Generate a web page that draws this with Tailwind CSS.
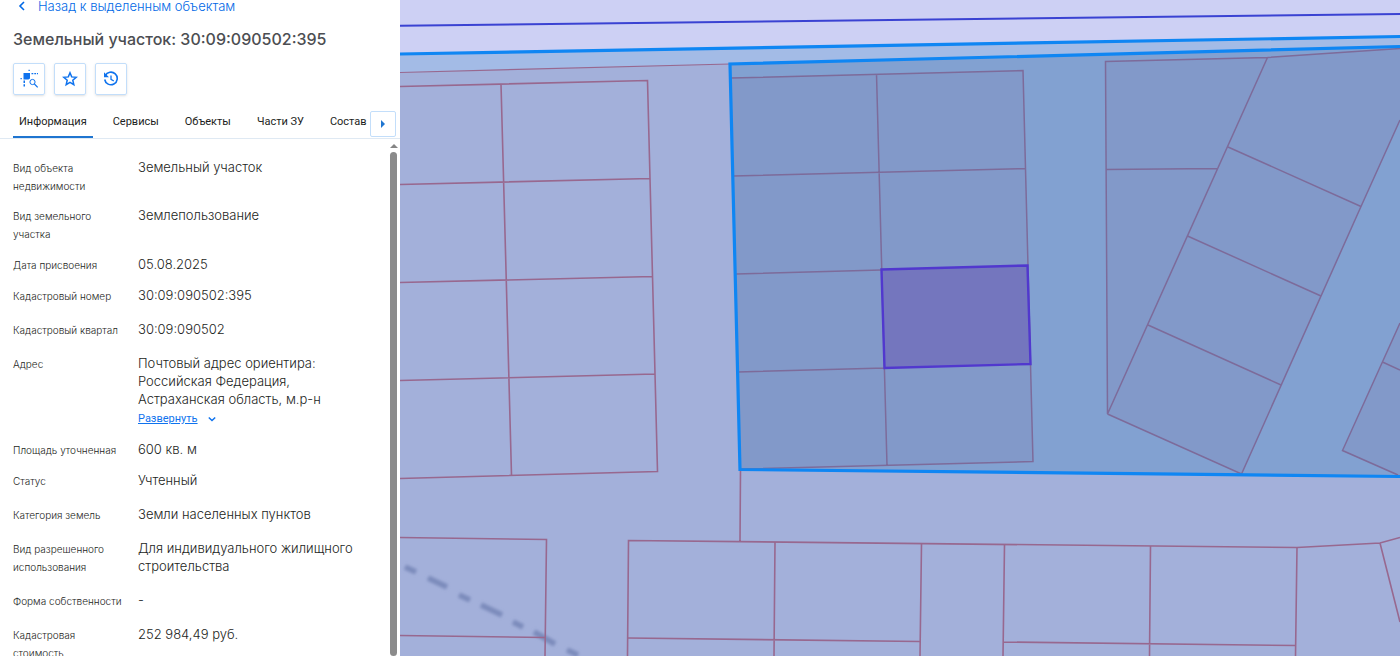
<!DOCTYPE html>
<html lang="ru">
<head>
  <meta charset="UTF-8" />
  <meta name="viewport" content="width=device-width, initial-scale=1" />
  <title>Земельный участок: 30:09:090502:395</title>
  <script src="https://cdn.jsdelivr.net/npm/@tailwindcss/browser@4"></script>
</head>
<body class="flex h-screen overflow-hidden bg-white font-['Inter',sans-serif] text-[#1c1e22]">
  <!-- Карточка объекта -->
  <aside class="flex w-[400px] shrink-0 flex-col">
    <header class="px-[13px]">
      <a href="#" class="flex h-4 items-center gap-2.5 pl-[3px] text-[13px] leading-4 font-light text-[#0068e6]">
        <svg class="-mt-1 h-3 w-3" viewBox="0 0 12 12" fill="none" stroke="currentColor" stroke-width="1.6"><path d="M8 2 4 6l4 4" /></svg>
        <span class="-mt-1">Назад к выделенным объектам</span>
      </a>
      <h1 class="mt-[11px] text-base leading-6 font-medium text-[#4c4e52]">Земельный участок: 30:09:090502:395</h1>
      <div class="mt-3 flex gap-[9px] text-[#0f73ee]">
        <button type="button" aria-label="Показать на карте" class="flex h-8 w-8 items-center justify-center rounded-xs border border-[#c3defa] shadow-sm">
          <svg class="h-5 w-5" viewBox="0 0 20 20" fill="currentColor">
            <path d="M4.500 4h6.500v5.500L9.500 10.500h-5zM9.500.800h1.300v1.300H9.500zM12.500 4h1.800v1.300h-1.800zM15.300 4h1.800v1.300h-1.800zM18 4h1v1.300h-1zM1.500 9h1.300v1.300H1.500zM4.500 11.500h1.500v2.500H4.500zM4.500 15.200h1.500v2.300H4.500z" />
            <circle cx="13.500" cy="13" r="2.600" fill="none" stroke="currentColor" />
            <path d="m15.400 15 3.300 3.300" stroke="currentColor" stroke-width="1.200" />
          </svg>
        </button>
        <button type="button" aria-label="В избранное" class="flex h-8 w-8 items-center justify-center rounded-xs border border-[#c3defa] shadow-sm">
          <svg class="h-4 w-4" viewBox="0 0 16 16" fill="none" stroke="currentColor" stroke-width="1.500"><path d="m8 1.800 1.700 4.100 4.500.4-3.400 2.900 1 4.400L8 11.300l-3.800 2.300 1-4.400-3.400-2.900 4.500-.4z" /></svg>
        </button>
        <button type="button" aria-label="История" class="flex h-8 w-8 items-center justify-center rounded-xs border border-[#c3defa] shadow-sm">
          <svg class="h-4 w-4" viewBox="0 0 16 16" fill="none" stroke="currentColor" stroke-width="1.600">
            <path d="M2.200 4.800A6.300 6.300 0 1 1 1.700 8.500" />
            <path d="M1 1.300v5h5z" fill="currentColor" stroke="none" />
            <path d="M8 4.500v3.800l2.800 1.700" stroke-width="1.300" />
          </svg>
        </button>
      </div>
    </header>

    <div class="mt-2.5 flex h-[34px] border-b border-[#dfe9f3] pr-1 pl-[13px] font-['Roboto',sans-serif] text-[11px]">
      <nav class="flex min-w-0 flex-1 gap-3.5 whitespace-nowrap">
        <button type="button" class="shrink-0 border-b-2 border-[#1f75d0] px-1.5 pt-1">Информация</button>
        <button type="button" class="shrink-0 border-b-2 border-transparent px-1.5 pt-1">Сервисы</button>
        <button type="button" class="shrink-0 border-b-2 border-transparent px-1.5 pt-1">Объекты</button>
        <button type="button" class="shrink-0 border-b-2 border-transparent px-1.5 pt-1">Части ЗУ</button>
        <button type="button" class="shrink-0 border-b-2 border-transparent pt-1 pl-1.5">Состав</button>
      </nav>
      <button type="button" aria-label="Следующие вкладки" class="mt-1.5 flex h-[26px] w-[26px] shrink-0 items-center justify-center rounded-xs border border-[#c3defa] text-[#1f75d0]">
        <svg class="h-2 w-1" viewBox="0 0 4 8" fill="currentColor"><path d="M0 0v8l4-4z" /></svg>
      </button>
    </div>

    <div class="flex min-h-0 flex-1">
      <dl class="min-w-0 flex-1 overflow-hidden pt-[19px] pl-[13px] text-[13px] leading-[18px] font-light">
        <div class="mb-[11px] flex"><dt class="w-[125px] shrink-0 pt-px pr-4 text-[10px] leading-[18px]">Вид объекта недвижимости</dt><dd>Земельный участок</dd></div>
        <div class="mb-3 flex"><dt class="w-[125px] shrink-0 pt-px pr-4 text-[10px] leading-[18px]">Вид земельного участка</dt><dd>Землепользование</dd></div>
        <div class="mb-3 flex"><dt class="w-[125px] shrink-0 pt-px text-[10px] leading-[18px]">Дата присвоения</dt><dd>05.08.2025</dd></div>
        <div class="mb-[15px] flex"><dt class="w-[125px] shrink-0 pt-px text-[10px] leading-[18px]">Кадастровый номер</dt><dd>30:09:090502:395</dd></div>
        <div class="mb-[15px] flex"><dt class="w-[125px] shrink-0 pt-px text-[10px] leading-[18px]">Кадастровый квартал</dt><dd>30:09:090502</dd></div>
        <div class="mb-3 flex">
          <dt class="w-[125px] shrink-0 pt-px text-[10px] leading-[18px]">Адрес</dt>
          <dd>
            <p class="w-[200px]">Почтовый адрес ориентира: Российская Федерация, Астраханская область, м.р-н</p>
            <button type="button" class="mt-0.5 flex items-center gap-2.5 font-['Roboto',sans-serif] text-[11px] leading-[18px] font-normal text-[#0f73ee]">
              <span class="underline">Развернуть</span>
              <svg class="h-2 w-2" viewBox="0 0 8 8" fill="none" stroke="currentColor" stroke-width="1.500"><path d="m.8 2.500 3.200 3 3.200-3" /></svg>
            </button>
          </dd>
        </div>
        <div class="mb-3 flex"><dt class="w-[125px] shrink-0 pt-px text-[10px] leading-[18px]">Площадь уточненная</dt><dd>600 кв. м</dd></div>
        <div class="mb-[15px] flex"><dt class="w-[125px] shrink-0 pt-px text-[10px] leading-[18px]">Статус</dt><dd>Учтенный</dd></div>
        <div class="mb-[15px] flex"><dt class="w-[125px] shrink-0 pt-px text-[10px] leading-[18px]">Категория земель</dt><dd>Земли населенных пунктов</dd></div>
        <div class="mb-[15px] flex"><dt class="w-[125px] shrink-0 pt-px pr-4 text-[10px] leading-[18px]">Вид разрешенного использования</dt><dd>Для индивидуального жилищного строительства</dd></div>
        <div class="mb-[15px] flex"><dt class="w-[125px] shrink-0 pt-px text-[10px] leading-[18px]">Форма собственности</dt><dd>-</dd></div>
        <div class="mb-[15px] flex"><dt class="w-[125px] shrink-0 pt-px pr-10 text-[10px] leading-[18px]">Кадастровая стоимость</dt><dd>252 984,49 руб.</dd></div>
      </dl>
      <!-- Полоса прокрутки -->
      <div class="flex w-[13px] shrink-0 flex-col items-center gap-1 pt-[5px]">
        <svg class="h-1 w-2 shrink-0" viewBox="0 0 8 4" fill="#858585"><path d="M4 0 8 4H0z" /></svg>
        <div class="w-[7px] flex-1 rounded-full bg-[#8b8b8b]"></div>
      </div>
    </div>
  </aside>

  <!-- Карта -->
  <main class="min-w-0 flex-1 bg-[#a3b0da]">
    <svg class="h-full w-full" viewBox="400 0 1000 656" preserveAspectRatio="xMinYMin slice" fill="none">
      <defs><filter id="soft"><feGaussianBlur stdDeviation="1.700" /></filter></defs>
      <path fill="#cdd0f4" d="M400 0h1000v37L400 54z" />
      <path fill="#a3bbe6" d="M400 54 1400 37v10L730 64 400 72.500z" />
      <path fill="#82a1d1" d="M730 64 1400 46.500v430L740 469z" />
      <g fill="#8299c9">
        <path d="M731 78 1023 70.500 1033 461.500 740 469z" />
        <path d="M1105.500 61.500 1267.500 57.500 1400 48.500V120L1361 206.500 1241.500 474 1107.500 414z" />
        <path d="M1400 323 1342.500 450.500 1398 475H1400z" />
      </g>

      <g filter="url(#soft)" stroke="#7b8bbb" stroke-width="5.500">
        <path d="m405 567 11 5M428 578l19 9M459 595l11 5M481 605l21 10M513 622l10 5M534 632l21 12M567 650l11 5" />
      </g>

      <g stroke="#98688f" stroke-width="1.600">
        <path stroke-width="1.200" d="M400 72.500 730 64" />
        <path d="M400 86.500 647.500 80.500 657.500 471.500 400 478.500M501 84l10.500 391M400 184.500 650 178.500M400 282.500 652.500 276.500M400 380.500 655 374" />
        <path d="M400 537.500 546.500 539.500 545 656M400 635.500 545 637.500" />
        <path d="M740.500 470 740 541.500M627.500 656 628.500 540.500 1297 547.500 1380 543 1400 537.500M1380 543 1400 622" />
        <path d="M775 542 774 656M921.500 544 920 656M1004.500 545 1003 656M1150.500 546 1149.500 656M1297 547.500 1295.500 656M628 638 920 641.500M1003 642 1296 645.500" />
      </g>

      <g stroke="#7d6b9a" stroke-width="1.500">
        <path d="M731 78 1023 70.500 1033 461.500 740 469M876.500 74 887 465M733 176 1026 168.500M736 274 881 270M738 372 885 368" />
        <path d="M1400 48.500 1267.500 57.500 1105.500 61.500 1107.500 414 1267.500 57.500M1106 169.500 1218 168.500M1107.500 414 1241.500 474 1361 206.500 1400 120" />
        <path d="M1228 147 1361 206.500M1187.500 236 1321 296M1148 325 1281 385M1400 323 1342.500 450.500 1398 475M1382.500 362 1400 370" />
      </g>

      <path stroke="#3a42d2" stroke-width="2" d="M400 25.700 1400 14" />
      <g stroke="#0f86f3" stroke-width="3.200">
        <path d="M400 54 1400 36.500" />
        <path d="M1400 46.500 730 64 740 469.500 1400 476.500" />
      </g>
      <path fill="#7476be" stroke="#5138ce" stroke-width="2.400" d="M881.500 269.500 1027.500 265.500 1030.500 364 884.500 368z" />
    </svg>
  </main>
</body>
</html>
